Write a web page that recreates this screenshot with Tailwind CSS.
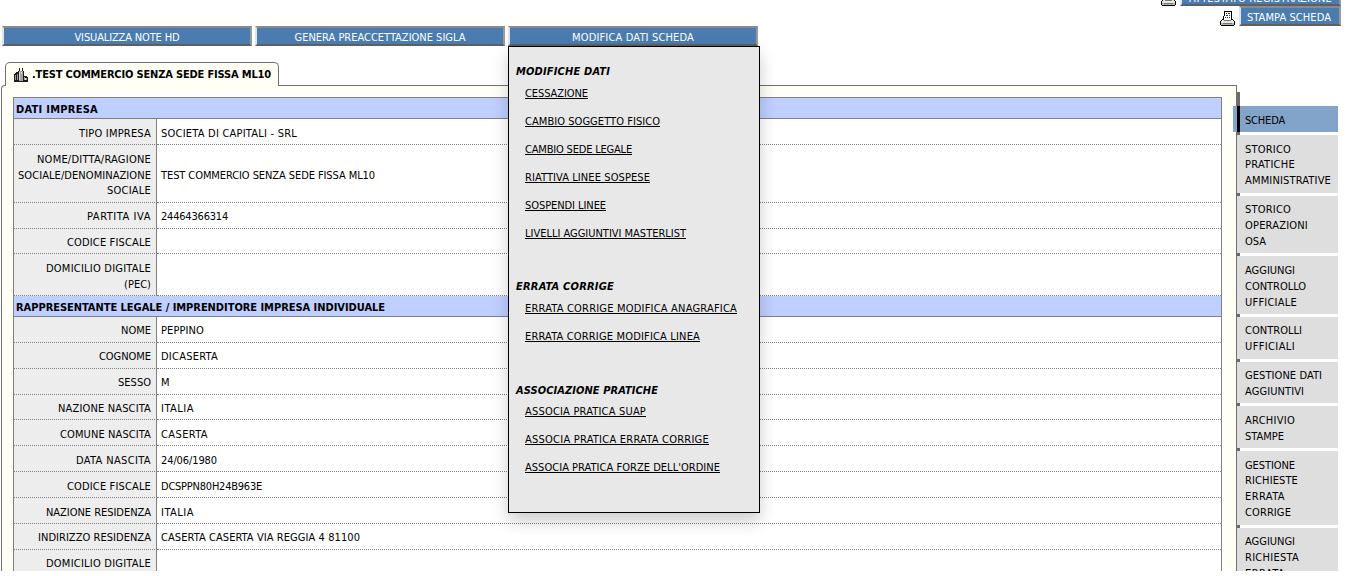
<!DOCTYPE html>
<html lang="it">
<head>
<meta charset="utf-8">
<title>Scheda</title>
<script src="https://cdn.jsdelivr.net/npm/@tailwindcss/browser@4"></script>
</head>
<body class="bg-white">
<div class="w-[1350px] h-[571px] overflow-hidden text-[11px] leading-[15.75px] text-black whitespace-nowrap font-['DejaVu_Sans_Condensed','DejaVu_Sans',sans-serif]">
  <header class="h-[62px] flex justify-between">
    <nav class="pt-[26px] pl-[2px] flex gap-[3px] text-white">
      <div class="w-[250px] h-5 bg-[#4a7cb0] border-2 border-t-[#8a8a8a] border-l-[#e3e3e3] border-r-[#9a9a9a] border-b-[#5f5f5f] flex items-center justify-center pt-[4px]"><span data-w="105">VISUALIZZA NOTE HD</span></div>
      <div class="w-[250px] h-5 bg-[#4a7cb0] border-2 border-t-[#8a8a8a] border-l-[#e3e3e3] border-r-[#9a9a9a] border-b-[#5f5f5f] flex items-center justify-center pt-[4px]"><span data-w="171">GENERA PREACCETTAZIONE SIGLA</span></div>
      <div class="relative w-[250px] h-5 bg-[#4a7cb0] border-2 border-t-[#8a8a8a] border-l-[#e3e3e3] border-r-[#9a9a9a] border-b-[#5f5f5f] flex items-center justify-center pt-[4px]"><span data-w="122">MODIFICA DATI SCHEDA</span>
        <div class="absolute z-10 -left-[2px] top-[18px] w-[252px] h-[467px] bg-[#e8e8e8] border border-black shadow-[0_8px_16px_rgba(0,0,0,0.2)] text-black pt-[17px] pl-[7px]">
          <h3 class="h-4 font-bold italic"><span data-w="94">MODIFICHE DATI</span></h3>
          <ul class="pl-[9px] leading-7">
            <li class="h-7"><a class="underline underline-offset-[1px] decoration-1" data-w="63">CESSAZIONE</a></li>
            <li class="h-7"><a class="underline underline-offset-[1px] decoration-1" data-w="135">CAMBIO SOGGETTO FISICO</a></li>
            <li class="h-7"><a class="underline underline-offset-[1px] decoration-1" data-w="107">CAMBIO SEDE LEGALE</a></li>
            <li class="h-7"><a class="underline underline-offset-[1px] decoration-1" data-w="125">RIATTIVA LINEE SOSPESE</a></li>
            <li class="h-7"><a class="underline underline-offset-[1px] decoration-1" data-w="81">SOSPENDI LINEE</a></li>
            <li class="h-7"><a class="underline underline-offset-[1px] decoration-1" data-w="161">LIVELLI AGGIUNTIVI MASTERLIST</a></li>
          </ul>
          <h3 class="mt-[31px] h-4 font-bold italic"><span data-w="98">ERRATA CORRIGE</span></h3>
          <ul class="pl-[9px] leading-7">
            <li class="h-7"><a class="underline underline-offset-[1px] decoration-1" data-w="212">ERRATA CORRIGE MODIFICA ANAGRAFICA</a></li>
            <li class="h-7"><a class="underline underline-offset-[1px] decoration-1" data-w="175">ERRATA CORRIGE MODIFICA LINEA</a></li>
          </ul>
          <h3 class="mt-8 h-[15px] font-bold italic"><span data-w="142">ASSOCIAZIONE PRATICHE</span></h3>
          <ul class="pl-[9px] leading-7">
            <li class="h-7"><a class="underline underline-offset-[1px] decoration-1" data-w="121">ASSOCIA PRATICA SUAP</a></li>
            <li class="h-7"><a class="underline underline-offset-[1px] decoration-1" data-w="184">ASSOCIA PRATICA ERRATA CORRIGE</a></li>
            <li class="h-7"><a class="underline underline-offset-[1px] decoration-1" data-w="195">ASSOCIA PRATICA FORZE DELL'ORDINE</a></li>
          </ul>
        </div>
      </div>
    </nav>
    <div class="-mt-[14px] pr-[9px] flex flex-col items-end text-white">
      <div class="flex items-center gap-[4px]">
        <svg class="w-[15px] h-[15px] mt-[4px]" viewBox="0 0 15 15" shape-rendering="crispEdges"><use href="#printer"/></svg>
        <div class="w-[161px] h-5 bg-[#4a7cb0] border-2 border-t-[#8a8a8a] border-l-[#e3e3e3] border-r-[#9a9a9a] border-b-[#5f5f5f] pl-[7px] pt-[3px]"><span data-w="143">ATTESTATO REGISTRAZIONE</span></div>
      </div>
      <div class="flex items-center gap-[4px]">
        <svg class="w-[15px] h-[15px] mt-[4px]" viewBox="0 0 15 15" shape-rendering="crispEdges">
          <g id="printer">
            <path fill="#fff" d="M4 1h7v8h-7z"/>
            <path fill="#000" d="M4 0h8v1h-8zM4 1h1v4h-1zM3 5h1v4h-1zM11 1h1v8h-1zM2 8h1v1h-1zM12 8h1v1h-1zM1 9h1v1h-1zM13 9h1v1h-1zM0 10h1v4h-1zM14 10h1v4h-1zM1 14h13v1h-13z"/>
            <path fill="#333" d="M6 2h1v1h-1zM8 2h2v1h-2zM6 4h2v1h-2zM9 4h1v1h-1zM5 6h1v1h-1zM7 6h1v1h-1zM9 6h1v1h-1z"/>
            <path fill="#e8e8e0" d="M2 9h11v1h-11zM1 10h13v2h-13z"/>
            <path fill="#777" d="M4 9h7v1h-7z"/>
            <path fill="#b4b4ac" d="M1 12h13v2h-13z"/>
            <path fill="#777" d="M3 12h9v1h-9z"/>
          </g>
        </svg>
        <div class="w-[102px] h-5 bg-[#4a7cb0] border-2 border-t-[#8a8a8a] border-l-[#e3e3e3] border-r-[#9a9a9a] border-b-[#5f5f5f] pl-[6px] pt-[2px]"><span data-w="84">STAMPA SCHEDA</span></div>
      </div>
    </div>
  </header>

  <div class="relative z-[1] ml-[5px] w-[274px] h-6 bg-[#fffff5] border border-b-0 border-[#6f6f6f] rounded-t-[5px] pl-[8px] pt-[4px] flex gap-[4px]">
    <svg class="w-[14px] h-[14px] mt-px" viewBox="0 0 14 14" shape-rendering="crispEdges">
      <path fill="#1c1c1c" d="M5 0h1v3h-1zM8 0h1v3h-1zM4 3h6v5h3v1h1v5h-14v-8h1v-1h1v-1h2z"/>
      <path fill="#a59fa3" d="M5 3h4v10h-4zM1 7h1v5h-1zM3 6h1v6h-1zM10 9h1v3h-1zM12 10h1v2h-1z"/>
      <path fill="#dedade" d="M5 4h1v8h-1zM7 4h1v2h-1zM11 10h1v2h-1z"/>
    </svg>
    <span class="font-bold" data-w="239">.TEST COMMERCIO SENZA SEDE FISSA ML10</span>
  </div>

  <div class="-mt-px flex pl-px">
    <main class="w-[1236px] h-[500px] border border-b-0 border-[#6f6f6f] rounded-tl-[4px] bg-[#fffff5] pt-[8px] pl-[11px] pr-[11px]">
      <div class="bg-white pt-[3px] pr-[3px] h-[492px]">
        <div id="sheet" class="border-x border-t border-[#808080]"></div>
      </div>
    </main>
    <aside class="mt-[7px] flex flex-col gap-[3px] pt-[14px] w-[101px] bg-[linear-gradient(90deg,#6b6b6b_3px,transparent_3px)]">
      <div class="relative h-[26px] -ml-[4px] bg-[linear-gradient(90deg,#82a4c8_4px,#000_4px,#000_7px,#82a4c8_7px)] pl-[12px] pt-[7px]"><span data-w="40">SCHEDA</span></div>
      <div class="h-[58px] bg-[#dedede] pl-[8px] pt-[6.5px]"><span data-w="46">STORICO</span><br><span data-w="50">PRATICHE</span><br><span data-w="86">AMMINISTRATIVE</span></div>
      <div class="h-[57px] bg-[#dedede] pl-[8px] pt-[6px]"><span data-w="46">STORICO</span><br><span data-w="63">OPERAZIONI</span><br><span data-w="21">OSA</span></div>
      <div class="h-[58px] bg-[#dedede] pl-[8px] pt-[7px]"><span data-w="50">AGGIUNGI</span><br><span data-w="61">CONTROLLO</span><br><span data-w="52">UFFICIALE</span></div>
      <div class="h-[42px] bg-[#dedede] pl-[8px] pt-[6px]"><span data-w="57">CONTROLLI</span><br><span data-w="50">UFFICIALI</span></div>
      <div class="h-[41px] bg-[#dedede] pl-[8px] pt-[6px]"><span data-w="77">GESTIONE DATI</span><br><span data-w="59">AGGIUNTIVI</span></div>
      <div class="h-[42px] bg-[#dedede] pl-[8px] pt-[7px]"><span data-w="50">ARCHIVIO</span><br><span data-w="39">STAMPE</span></div>
      <div class="h-[74px] bg-[#dedede] pl-[8px] pt-[6.5px]"><span data-w="50">GESTIONE</span><br><span data-w="53">RICHIESTE</span><br><span data-w="40">ERRATA</span><br><span data-w="46">CORRIGE</span></div>
      <div class="h-[60px] bg-[#dedede] pl-[8px] pt-[6px]"><span data-w="50">AGGIUNGI</span><br><span data-w="54">RICHIESTA</span><br><span data-w="40">ERRATA</span></div>
    </aside>
  </div>
</div>
<script>
const LOW = 'pt-[5px]', MID = 'pt-[3px]';
// [row height, text offset, label lines [text, width], value [text, width]]
const company = [
  ['h-[26px]', LOW, [['TIPO IMPRESA', 72]], ['SOCIETA DI CAPITALI - SRL', 136]],
  ['h-[58px]', 'pt-[4px]', [['NOME/DITTA/RAGIONE', 114], ['SOCIALE/DENOMINAZIONE', 133], ['SOCIALE', 44]], ['TEST COMMERCIO SENZA SEDE FISSA ML10', 214]],
  ['h-[26px]', MID, [['PARTITA IVA', 64]], ['24464366314', 67]],
  ['h-[25px]', MID, [['CODICE FISCALE', 84]]],
  ['h-[42px]', LOW, [['DOMICILIO DIGITALE', 105], ['(PEC)', 27]]],
];
const person = [
  ['h-[26px]', MID, [['NOME', 30]], ['PEPPINO', 43]],
  ['h-[26px]', MID, [['COGNOME', 52]], ['DICASERTA', 57]],
  ['h-[26px]', MID, [['SESSO', 33]], ['M', 9]],
  ['h-[25px]', MID, [['NAZIONE NASCITA', 93]], ['ITALIA', 33]],
  ['h-[26px]', LOW, [['COMUNE NASCITA', 91]], ['CASERTA', 47]],
  ['h-[26px]', LOW, [['DATA NASCITA', 75]], ['24/06/1980', 56]],
  ['h-[26px]', LOW, [['CODICE FISCALE', 84]], ['DCSPPN80H24B963E', 101]],
  ['h-[26px]', LOW, [['NAZIONE RESIDENZA', 105]], ['ITALIA', 33]],
  ['h-[26px]', MID, [['INDIRIZZO RESIDENZA', 113]], ['CASERTA CASERTA VIA REGGIA 4 81100', 199]],
  ['h-[26px]', MID, [['DOMICILIO DIGITALE', 105]]],
];
const run = ([t, w]) => `<span data-w="${w}">${t}</span>`;
const head = (t, w) => `<div class="h-[21px] bg-[#bfcfff] border-b border-[#808080] font-bold pl-[2px] pt-[4px]">${run([t, w])}</div>`;
const row = ([h, pt, labels, value]) => `<div class="flex ${h}">
  <div class="w-[143px] shrink-0 bg-[#ededed] border-r border-r-[#808080] border-b border-b-[#808080] [border-bottom-style:dotted] pr-[5px] ${pt} flex flex-col items-end justify-center">${labels.map(run).join('')}</div>
  <div class="grow border-b border-dotted border-[#808080] pl-[4px] ${pt} flex items-center">${value ? run(value) : ''}</div></div>`;
document.getElementById('sheet').innerHTML =
  head('DATI IMPRESA', 82) + company.map(row).join('') +
  head('RAPPRESENTANTE LEGALE / IMPRENDITORE IMPRESA INDIVIDUALE', 369) + person.map(row).join('');

// Track each text run to its nominal width
addEventListener('load', () => {
  document.querySelectorAll('[data-w]').forEach(e => {
    const r = document.createRange();
    r.selectNodeContents(e);
    e.style.letterSpacing = (e.dataset.w - r.getBoundingClientRect().width) / e.textContent.length + 'px';
  });
});
</script>
</body>
</html>
